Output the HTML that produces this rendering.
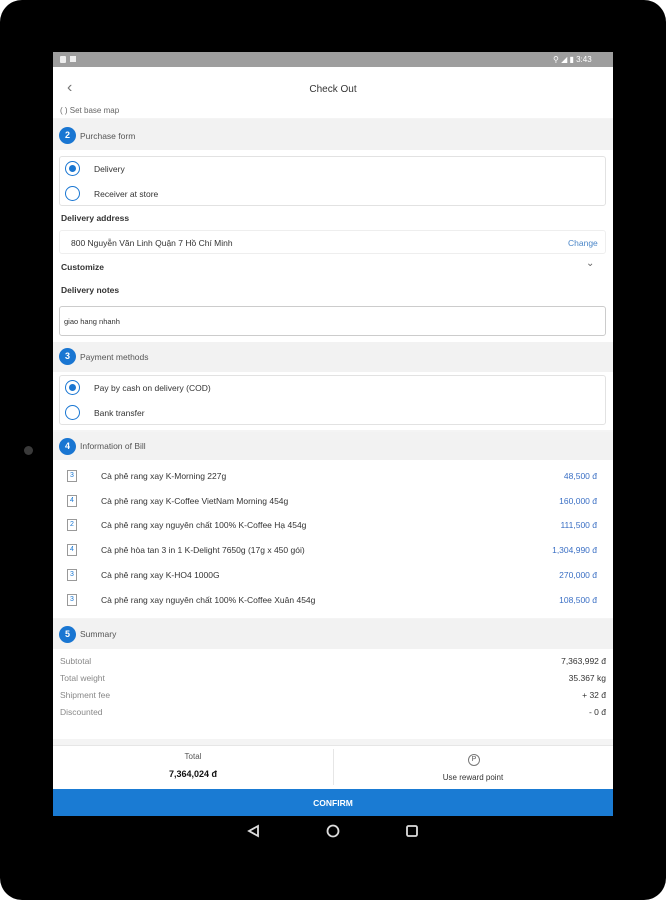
<!DOCTYPE html>
<html><head><meta charset="utf-8"><style>
*{margin:0;padding:0;box-sizing:border-box}
html,body{width:666px;height:900px;background:#fff;overflow:hidden;font-family:"Liberation Sans",sans-serif;}
.dev{position:absolute;left:0;top:0;width:666px;height:900px;background:#000;border-radius:22px}
.cam{position:absolute;left:24px;top:446px;width:9px;height:9px;border-radius:50%;background:#3a3a3a}
.scr{position:absolute;left:53px;top:52px;width:560px;height:764px;background:#f4f4f4;overflow:hidden}
.a{position:absolute}
.t{position:absolute;font-size:8.5px;color:#333;white-space:nowrap}
.hd{position:absolute;left:0;width:560px;background:#f2f2f2}
.num{position:absolute;left:6px;width:17px;height:17px;border-radius:50%;background:#1976d2;color:#fff;font-size:9px;font-weight:bold;text-align:center;line-height:17px}
.card{position:absolute;left:6px;width:547px;background:#fff;border:1px solid #e2e2e2;border-radius:3px}
.rad{position:absolute;left:12px;width:15px;height:15px;border-radius:50%;border:1.5px solid #1976d2;background:#fff}
.rad.on::after{content:"";position:absolute;left:2.5px;top:2.5px;width:7px;height:7px;border-radius:50%;background:#1976d2}
.qty{position:absolute;left:14px;width:10px;height:12px;border:1px solid #999;font-size:7px;color:#1976d2;text-align:center;line-height:10px;background:#fff}
.pr{position:absolute;right:16px;font-size:8.5px;color:#3a6fc4}
.sl{position:absolute;left:7px;font-size:8.5px;color:#888}
.sr{position:absolute;right:7px;font-size:8.5px;color:#333}
</style></head><body>
<div class="dev"></div>
<div class="cam"></div>
<div class="scr">
  <div class="a" style="left:0;top:0;width:560px;height:15px;background:#9e9e9e"></div>
  <div class="a" style="left:7px;top:4px;width:6px;height:7px;background:#eee;border-radius:1px"></div>
  <div class="a" style="left:17px;top:4px;width:6px;height:6px;background:#eee"></div>
  <div class="t" style="left:500px;top:3px;color:#fff;font-size:8px">⚲ ◢ ▮ 3:43</div>
  <div class="a" style="left:0;top:15px;width:560px;height:43px;background:#fff"></div>
  <div class="t" style="left:14px;top:27px;font-size:16px;color:#777">‹</div>
  <div class="t" style="left:0;width:560px;text-align:center;top:32px;font-size:10px;color:#333">Check Out</div>
  <div class="a" style="left:0;top:58px;width:560px;height:8px;background:#fff"></div>
  <div class="t" style="left:7px;top:54px;font-size:8px;color:#666">( ) Set base map</div>

  <div class="hd" style="top:67px;height:31px"></div>
  <div class="num" style="top:75px">2</div>
  <div class="t" style="left:27px;top:79px;color:#555">Purchase form</div>
  <div class="a" style="left:0;top:98px;width:560px;height:240px;background:#fff"></div>
  <div class="card" style="top:104px;height:50px"></div>
  <div class="rad on" style="top:109px"></div>
  <div class="t" style="left:41px;top:112px">Delivery</div>
  <div class="rad" style="top:134px"></div>
  <div class="t" style="left:41px;top:137px">Receiver at store</div>
  <div class="t" style="left:8px;top:161px;font-weight:bold">Delivery address</div>
  <div class="card" style="top:178px;height:24px;border-color:#eee"></div>
  <div class="t" style="left:18px;top:186px">800 Nguyễn Văn Linh Quận 7 Hồ Chí Minh</div>
  <div class="t" style="left:515px;top:186px;color:#4a86c8">Change</div>
  <div class="t" style="left:8px;top:210px;font-weight:bold">Customize</div>
  <div class="t" style="left:533px;top:206px;color:#666;font-size:10px">⌄</div>
  <div class="t" style="left:8px;top:233px;font-weight:bold">Delivery notes</div>
  <div class="card" style="top:254px;height:30px;border-color:#ccc"></div>
  <div class="t" style="left:11px;top:265px;font-size:7.5px">giao hang nhanh</div>

  <div class="hd" style="top:290px;height:30px"></div>
  <div class="num" style="top:296px">3</div>
  <div class="t" style="left:27px;top:300px;color:#555">Payment methods</div>
  <div class="a" style="left:0;top:320px;width:560px;height:58px;background:#fff"></div>
  <div class="card" style="top:323px;height:50px"></div>
  <div class="rad on" style="top:328px"></div>
  <div class="t" style="left:41px;top:331px">Pay by cash on delivery (COD)</div>
  <div class="rad" style="top:353px"></div>
  <div class="t" style="left:41px;top:356px">Bank transfer</div>

  <div class="hd" style="top:380px;height:28px"></div>
  <div class="num" style="top:386px">4</div>
  <div class="t" style="left:27px;top:389px;color:#555">Information of Bill</div>
  <div class="a" style="left:0;top:408px;width:560px;height:158px;background:#fff"></div>
  <div class="qty" style="top:418px">3</div><div class="t" style="left:48px;top:419px">Cà phê rang xay K-Morning 227g</div><div class="pr" style="top:419px">48,500 đ</div>
  <div class="qty" style="top:443px">4</div><div class="t" style="left:48px;top:444px">Cà phê rang xay K-Coffee VietNam Morning 454g</div><div class="pr" style="top:444px">160,000 đ</div>
  <div class="qty" style="top:467px">2</div><div class="t" style="left:48px;top:468px">Cà phê rang xay nguyên chất 100% K-Coffee Hạ 454g</div><div class="pr" style="top:468px">111,500 đ</div>
  <div class="qty" style="top:492px">4</div><div class="t" style="left:48px;top:493px">Cà phê hòa tan 3 in 1 K-Delight 7650g (17g x 450 gói)</div><div class="pr" style="top:493px">1,304,990 đ</div>
  <div class="qty" style="top:517px">3</div><div class="t" style="left:48px;top:518px">Cà phê rang xay K-HO4 1000G</div><div class="pr" style="top:518px">270,000 đ</div>
  <div class="qty" style="top:542px">3</div><div class="t" style="left:48px;top:543px">Cà phê rang xay nguyên chất 100% K-Coffee Xuân 454g</div><div class="pr" style="top:543px">108,500 đ</div>

  <div class="hd" style="top:567px;height:30px"></div>
  <div class="num" style="top:574px">5</div>
  <div class="t" style="left:27px;top:577px;color:#555">Summary</div>
  <div class="a" style="left:0;top:597px;width:560px;height:90px;background:#fff"></div>
  <div class="sl" style="top:604px">Subtotal</div><div class="sr" style="top:604px">7,363,992 đ</div>
  <div class="sl" style="top:621px">Total weight</div><div class="sr" style="top:621px">35.367 kg</div>
  <div class="sl" style="top:638px">Shipment fee</div><div class="sr" style="top:638px">+ 32 đ</div>
  <div class="sl" style="top:655px">Discounted</div><div class="sr" style="top:655px">- 0 đ</div>

  <div class="a" style="left:0;top:693px;width:560px;height:44px;background:#fff;border-top:1px solid #e6e6e6"></div>
  <div class="a" style="left:280px;top:697px;width:1px;height:36px;background:#e6e6e6"></div>
  <div class="t" style="left:0;width:280px;text-align:center;top:700px;font-size:8px;color:#555">Total</div>
  <div class="t" style="left:0;width:280px;text-align:center;top:717px;font-size:9px;font-weight:bold;color:#111">7,364,024 đ</div>
  <div class="a" style="left:415px;top:702px;width:12px;height:12px;border:1px solid #777;border-radius:50%;font-size:7px;color:#555;text-align:center;line-height:10px">P</div>
  <div class="t" style="left:280px;width:280px;text-align:center;top:721px;font-size:8px;color:#333">Use reward point</div>
  <div class="a" style="left:0;top:737px;width:560px;height:27px;background:#1a7bd3"></div>
  <div class="t" style="left:0;width:560px;text-align:center;top:746px;color:#fff;font-weight:bold;font-size:8.5px">CONFIRM</div>
</div>
<svg class="a" style="left:240px;top:822px" width="190" height="18">
 <path d="M18 4 L9 9 L18 14 Z" fill="none" stroke="#ddd" stroke-width="1.8"/>
 <circle cx="93" cy="9" r="5.5" fill="none" stroke="#ddd" stroke-width="1.8"/>
 <rect x="167" y="4" width="10" height="10" rx="1.5" fill="none" stroke="#ddd" stroke-width="1.8"/>
</svg>
</body></html>
